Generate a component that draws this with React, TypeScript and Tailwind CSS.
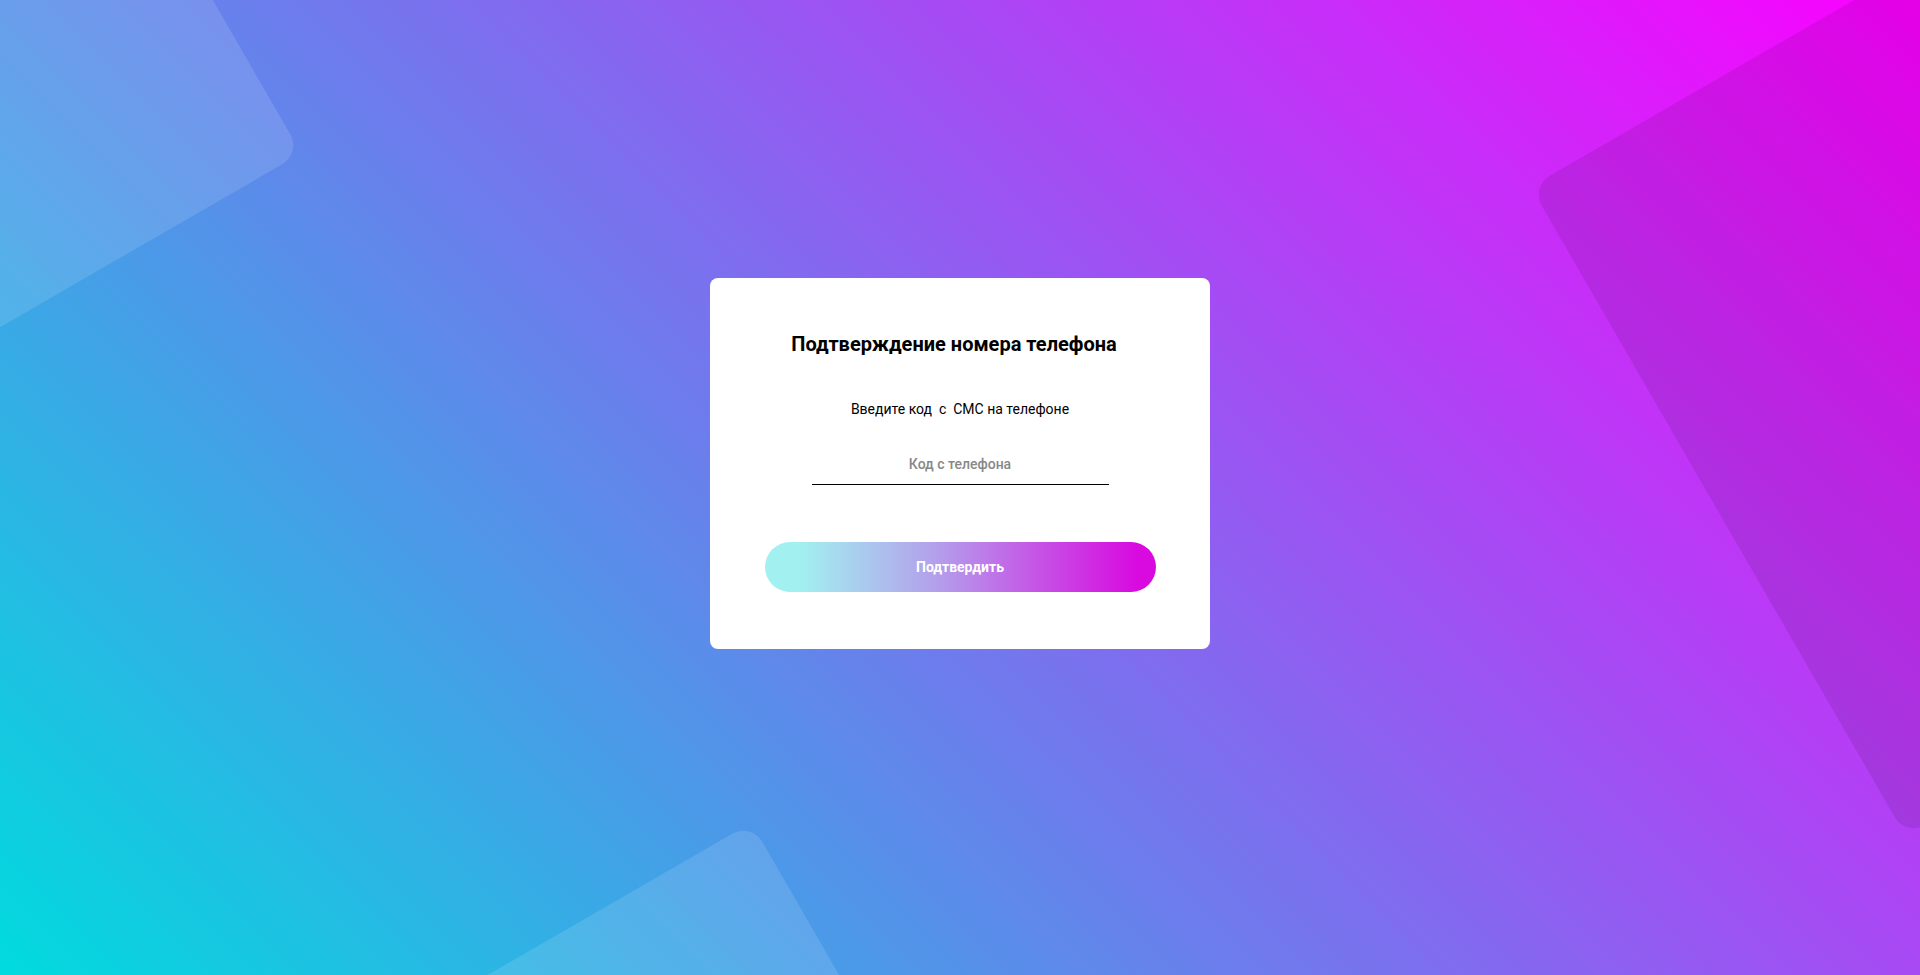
import React from "react";

export default function App() {
  return (
    <div
      className="relative w-screen h-[975px] overflow-hidden bg-[linear-gradient(45deg,#00dbde_0%,#fc00ff_100%)]"
      style={{ fontFamily: "Roboto, 'Noto Sans', sans-serif" }}
    >
      {/* decorative rotated squares */}
      <div className="absolute left-[-586px] top-[-359px] w-[750px] h-[750px] rounded-[22px] bg-white/[0.12] rotate-[-30deg]" />
      <div className="absolute left-[239px] top-[960px] w-[750px] h-[750px] rounded-[22px] bg-white/[0.12] rotate-[-30deg]" />
      <div className="absolute left-[1668px] top-[-51px] w-[750px] h-[750px] rounded-[22px] bg-black/[0.09] rotate-[-30deg]" />

      <div className="relative flex h-full w-full items-center justify-center pb-[48px]">
        <div className="flex w-[500px] flex-col items-center rounded-[8px] bg-white pt-[54px] pb-[57px]">
          <h1 className="pr-[12px] text-[20px] leading-[24px] font-bold text-black">
            Подтверждение номера телефона
          </h1>
          <p className="mt-[43px] whitespace-pre text-[14px] leading-[20px] text-black">
            {"Введите код  с  СМС на телефоне"}
          </p>
          <input
            className="mt-[35px] h-[31px] w-[297px] border-b border-black pb-[10px] text-center text-[14px] font-medium leading-[20px] text-black outline-none placeholder:text-[#888888]"
            placeholder="Код с телефона"
          />
          <button className="mt-[57px] h-[50px] w-[391px] rounded-full bg-[linear-gradient(90deg,#a2f0f0_9%,#b49ceb_45%,#d80ae0_95%)] text-[14px] font-bold text-white">
            Подтвердить
          </button>
        </div>
      </div>
    </div>
  );
}
